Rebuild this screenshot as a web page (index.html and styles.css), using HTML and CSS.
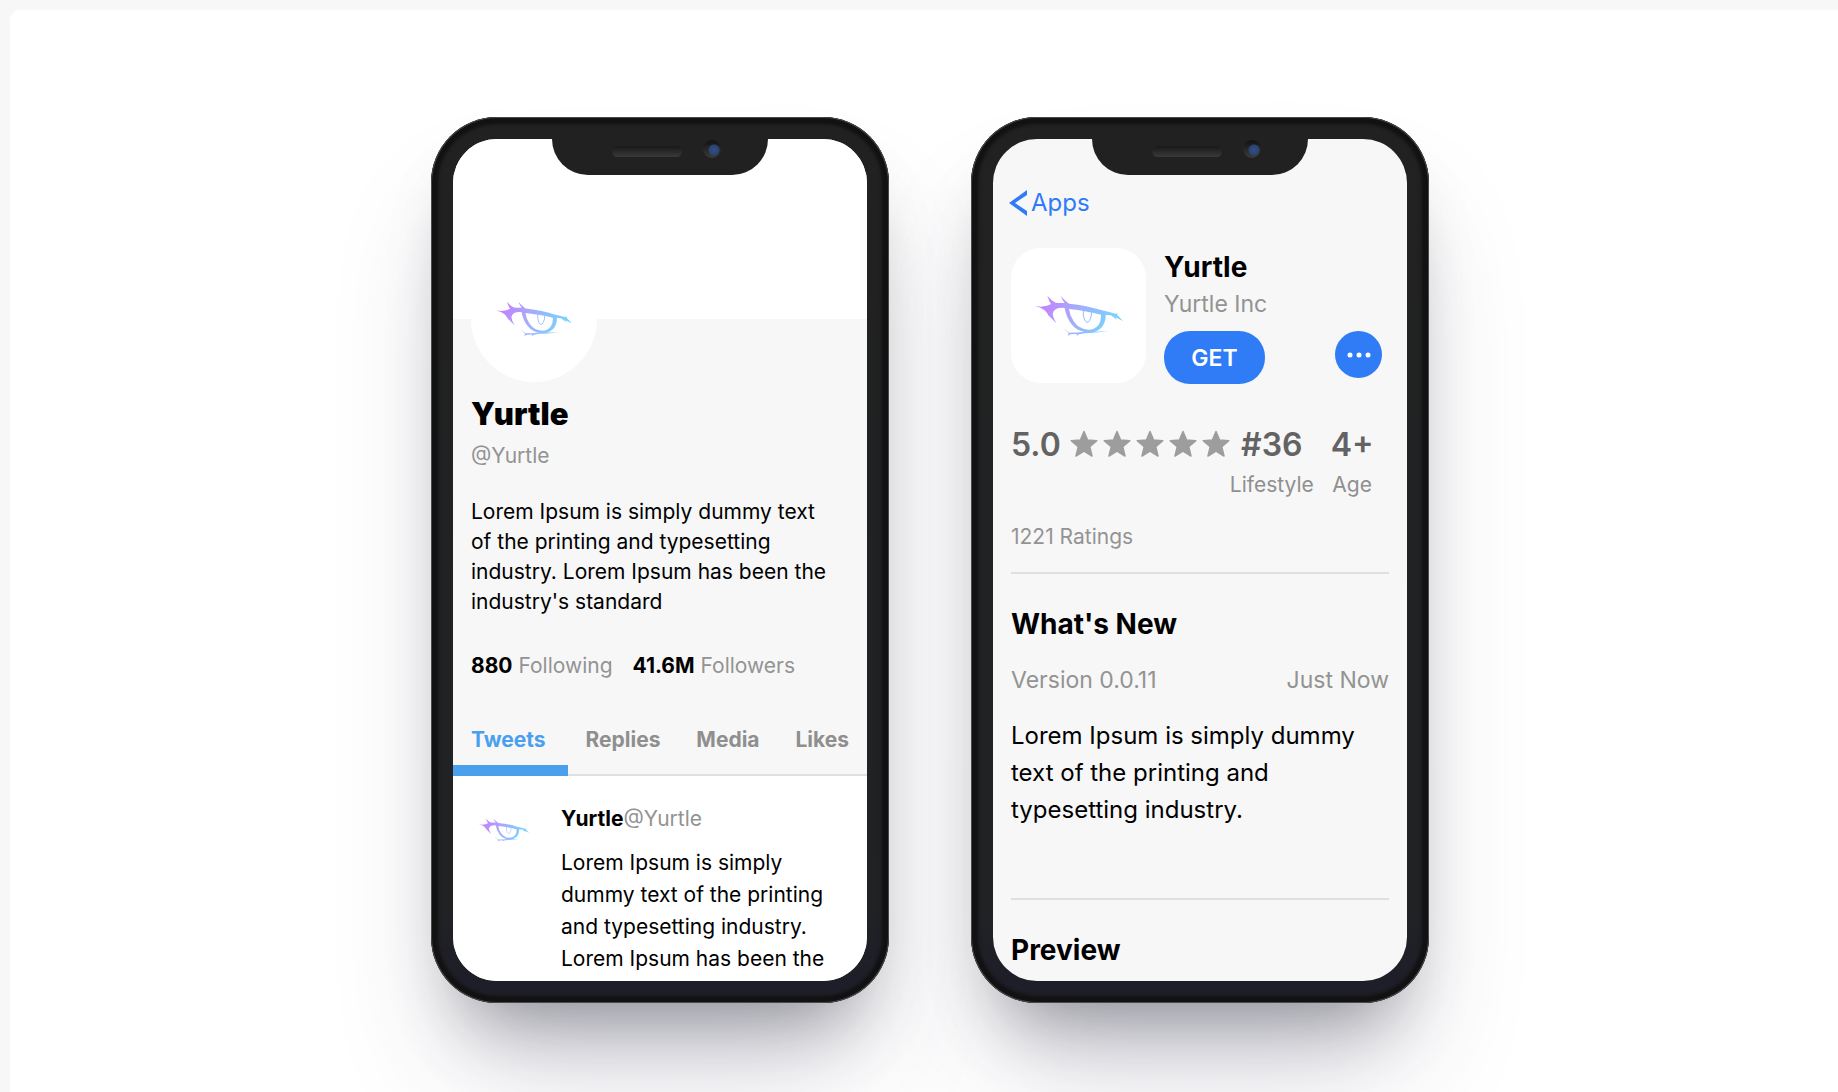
FILE: index.html
```html
<!DOCTYPE html>
<html lang="en">
<head>
<meta charset="utf-8">
<meta name="viewport" content="width=device-width, initial-scale=1">
<title>Yurtle</title>
<link rel="stylesheet" href="styles.css">
</head>
<body>
<svg class="defs" aria-hidden="true">
  <defs>
    <linearGradient id="eye-ink" gradientUnits="userSpaceOnUse" x1="60" y1="60" x2="260" y2="140">
      <stop offset="0" stop-color="#c77dff"/>
      <stop offset="0.5" stop-color="#a5abfb"/>
      <stop offset="1" stop-color="#7cd0ff"/>
    </linearGradient>
    <symbol id="eye" viewBox="44 45 264 126">
      <g fill="url(#eye-ink)">
        <path d="M44 78 L62 80 Q82 79 92 72 Q86 63 81 47 Q92 61 106 68 Q118 69 133 69 Q126 60 121 48 Q133 62 146 71 Q200 76 245 91 Q268 97 285 101 L292 99 L290 104 L308 123 L285 112 L290 120 L272 106 Q262 105 256 104 Q257 128 243 143 Q228 158 204 158 Q172 156 153 132 Q138 112 133 84 Q118 82 107 87 Q98 92 97 102 Q98 114 108 130 Q95 117 84 106 Q80 98 73 91 Q62 82 44 78 Z M146 87 Q148 106 160 124 Q176 148 204 149 Q224 149 235 134 Q243 122 242 104 Q200 93 146 87 Z" fill-rule="evenodd"/>
        <path d="M127 143 L146 158 Q172 158 194 155 Q230 156 264 154 Q225 159 194 160 L176 163 L168 168 L170 162 L150 163 L142 168 L145 160 Z"/>
      </g>
      <path d="M189 91 Q187 107 193 120 Q201 134 208 121 Q215 108 213 96" fill="none" stroke="url(#eye-ink)" stroke-width="3"/>
    </symbol>
    <symbol id="star" viewBox="0 0 28 28">
      <path d="M14 1.500L17.600 10L26.800 10.800L19.800 16.800L22 26L14 21.200L6 26L8.200 16.800L1.200 10.800L10.400 10Z" fill="#9d9d9d" stroke="#9d9d9d" stroke-width="1.500" stroke-linejoin="round"/>
    </symbol>
  </defs>
</svg>

<main class="stage">
  <section class="phone" aria-label="Social profile preview">
    <div class="notch"><span class="speaker"></span><span class="camera"></span></div>
    <div class="screen">
      <div class="cover"></div>
      <div class="profile">
        <div class="avatar"><svg class="eye-avatar"><use href="#eye"/></svg></div>
        <h2 class="profile-name">Yurtle</h2>
        <p class="handle">@Yurtle</p>
        <p class="bio">Lorem Ipsum is simply dummy text of the printing and typesetting industry. Lorem Ipsum has been the industry's standard</p>
        <p class="stats"><span><b>880</b> Following</span><span><b>41.6M</b> Followers</span></p>
      </div>
      <nav class="tabs">
        <button class="tab tab-active" type="button">Tweets</button>
        <button class="tab" type="button">Replies</button>
        <button class="tab" type="button">Media</button>
        <button class="tab" type="button">Likes</button>
      </nav>
      <article class="tweet">
        <div class="tweet-avatar"><svg class="eye-tweet"><use href="#eye"/></svg></div>
        <div class="tweet-body">
          <p class="tweet-head"><b>Yurtle</b><span>@Yurtle</span></p>
          <p class="tweet-text">Lorem Ipsum is simply dummy text of the printing and typesetting industry. Lorem Ipsum has been the</p>
        </div>
      </article>
    </div>
  </section>

  <section class="phone" aria-label="App store preview">
    <div class="notch"><span class="speaker"></span><span class="camera"></span></div>
    <div class="screen store">
      <a class="back" href="#"><svg class="chevron" viewBox="0 0 18 26"><path d="M18 0V5L6 13L18 21V26L0 13Z" fill="#2f7cf6"/></svg>Apps</a>
      <header class="app">
        <div class="app-icon"><svg class="eye-app"><use href="#eye"/></svg></div>
        <div class="app-info">
          <h2 class="title">Yurtle</h2>
          <p class="vendor">Yurtle Inc</p>
          <div class="actions">
            <button class="get" type="button">GET</button>
            <button class="more" type="button" aria-label="More"><svg class="dots" viewBox="0 0 24 6"><g fill="#fff"><circle cx="3" cy="3" r="2.500"/><circle cx="12" cy="3" r="2.500"/><circle cx="21" cy="3" r="2.500"/></g></svg></button>
          </div>
        </div>
      </header>
      <div class="facts">
        <div class="rating">
          <span class="figure">5.0</span>
          <span class="stars" role="img" aria-label="5 stars"><svg class="star"><use href="#star"/></svg><svg class="star"><use href="#star"/></svg><svg class="star"><use href="#star"/></svg><svg class="star"><use href="#star"/></svg><svg class="star"><use href="#star"/></svg></span>
        </div>
        <div class="fact fact-rank"><span class="figure">#36</span><span class="label">Lifestyle</span></div>
        <div class="fact"><span class="figure">4+</span><span class="label">Age</span></div>
      </div>
      <p class="count">1221 Ratings</p>
      <section class="block">
        <h2 class="title">What's New</h2>
        <p class="version"><span>Version 0.0.11</span><span>Just Now</span></p>
        <p class="notes">Lorem Ipsum is simply dummy text of the printing and typesetting industry.</p>
      </section>
      <section class="block">
        <h2 class="title">Preview</h2>
      </section>
    </div>
  </section>
</main>
</body>
</html>
```
FILE: styles.css
```css
* { box-sizing: border-box; }

body {
  margin: 0;
  padding: 10px 0 0 10px;
  background: #f7f7f7;
  color: #000;
  font-family: Inter, "Liberation Sans", sans-serif;
  font-size: 21px;
  line-height: 30px;
  overflow: hidden;
}

h2, p { margin: 0; }
b { font-weight: 700; }
svg { display: block; }
button { border: 0; padding: 0; background: none; color: inherit; font: inherit; cursor: pointer; }
.defs { position: absolute; width: 0; height: 0; }

.stage {
  display: flex;
  justify-content: center;
  gap: 82px;
  min-height: 100vh;
  padding: 107px 0 89px 12px;
  background: #fff;
  border-radius: 10px 0 0 0;
}

/* Device frame */
.phone {
  position: relative;
  flex: none;
  align-self: flex-start;
  width: 458px;
  padding: 22px;
  border-radius: 66px;
  background: linear-gradient(#212121, #202224 90%, #1e1e28 97%);
  box-shadow:
    inset 0 0 0 1px #4a4a4a,
    inset 0 0 3px 7px #121213,
    0 80px 120px -30px rgba(50, 50, 93, 0.25),
    0 46px 70px -34px rgba(0, 0, 0, 0.36);
}

.screen {
  height: 842px;
  overflow: hidden;
  border-radius: 44px;
  background: #f7f7f7;
}

.notch {
  position: absolute;
  top: 20px;
  left: 50%;
  width: 216px;
  height: 38px;
  margin-left: -108px;
  border-radius: 0 0 36px 36px;
  background: #212121;
}

.speaker {
  position: absolute;
  top: 9px;
  left: 60px;
  width: 70px;
  height: 11px;
  border-radius: 6px;
  background: linear-gradient(#181818, #3a3a3a);
}

.camera {
  position: absolute;
  top: 3px;
  left: 151px;
  width: 18px;
  height: 18px;
  border-radius: 50%;
  background:
    radial-gradient(circle at 11px 10px, #33507f 0, #2b4470 5px, transparent 6px),
    linear-gradient(#111, #3c3c3c);
}

/* Social profile */
.cover { height: 180px; background: #fff; }
.profile { padding: 0 18px; }

.avatar {
  display: grid;
  place-items: center;
  width: 126px;
  height: 126px;
  margin-top: -63px;
  border-radius: 50%;
  background: #fff;
}

.eye-avatar { width: 76px; height: 36px; }
.profile-name { margin-top: 14px; font-size: 31px; line-height: 36px; font-weight: 900; }
.handle { margin-top: 9px; color: #939393; }
.bio { margin-top: 26px; padding-right: 12px; line-height: 30px; }
.stats { display: flex; gap: 20px; margin-top: 34px; color: #939393; }
.stats b { color: #000; }

.tabs {
  display: flex;
  justify-content: space-between;
  margin-top: 44px;
  border-bottom: 2px solid #dfdfdf;
}

.tab {
  margin-bottom: -2px;
  padding: 0 18px 10px 17px;
  border-bottom: 11px solid transparent;
  color: #8f8f8f;
  font-weight: 700;
}

.tab-active { padding-left: 18px; padding-right: 22px; border-color: #4aa0ec; color: #4aa0ec; }

.tweet {
  display: flex;
  gap: 24px;
  padding: 21px 18px;
  background: #fff;
}

.tweet-avatar { display: grid; flex: none; place-items: center; width: 66px; height: 66px; }
.eye-tweet { width: 52px; height: 24px; }
.tweet-body { flex: 1; padding-top: 7px; }
.tweet-head span { color: #939393; }
.tweet-text { margin-top: 13px; line-height: 32px; }

/* App store */
.store { padding: 49px 18px 0 16px; }

.back {
  display: flex;
  align-items: center;
  gap: 4px;
  width: max-content;
  color: #2f7cf6;
  font-size: 24px;
  text-decoration: none;
}

.chevron { width: 18px; height: 26px; }
.app, .facts, .count, .block { margin-left: 2px; }
.app { display: flex; gap: 18px; margin-top: 30px; }

.app-icon {
  display: grid;
  flex: none;
  place-items: center;
  width: 135px;
  height: 135px;
  border-radius: 30px;
  background: #fff;
}

.eye-app { width: 88px; height: 42px; }
.app-info { flex: 1; }
.title { font-size: 28px; line-height: 36px; font-weight: 700; }
.app-info .title { padding-top: 1px; }
.vendor { margin-top: 4px; color: #939393; font-size: 23px; }

.actions {
  display: flex;
  justify-content: space-between;
  align-items: flex-start;
  margin-top: 12px;
  padding-right: 7px;
}

.get {
  width: 101px;
  height: 53px;
  border-radius: 26px;
  background: #2f7cf6;
  color: #fff;
  font-size: 23px;
  font-weight: 600;
}

.more {
  display: grid;
  place-items: center;
  width: 47px;
  height: 47px;
  border-radius: 50%;
  background: #2f7cf6;
}

.dots { width: 24px; height: 6px; }
.facts { display: flex; margin-top: 41px; color: #8f8f8f; }
.rating { display: flex; align-items: flex-start; gap: 9px; }
.figure { color: #636363; font-size: 32px; line-height: 40px; font-weight: 600; }
.stars { display: flex; gap: 5px; padding-top: 5px; }
.star { width: 28px; height: 28px; }
.fact { display: flex; flex-direction: column; align-items: center; gap: 5px; }
.fact-rank { margin-right: 17px; }
.count { margin-top: 22px; color: #939393; }

.block { margin-top: 20px; padding: 32px 0 50px; border-top: 2px solid #dfdfdf; }
.version { display: flex; justify-content: space-between; margin-top: 23px; color: #939393; font-size: 23px; }
.notes { margin-top: 22px; font-size: 24px; line-height: 37px; }
```
